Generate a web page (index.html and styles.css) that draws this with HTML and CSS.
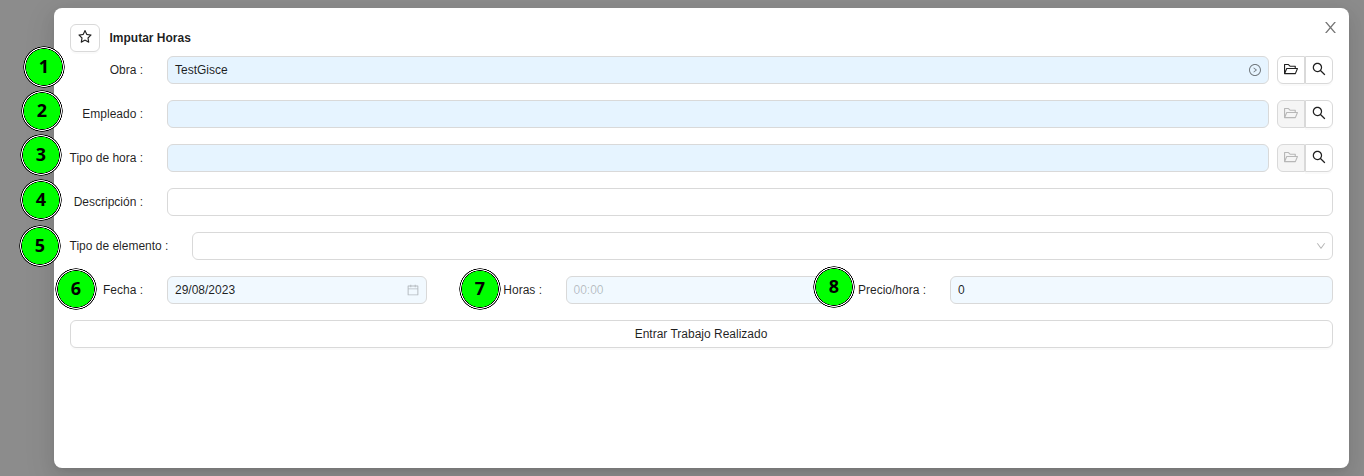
FILE: index.html
```html
<!DOCTYPE html>
<html lang="es">
<head>
<meta charset="utf-8">
<title>Imputar Horas</title>
<link rel="stylesheet" href="styles.css">
</head>
<body>
<svg class="sprite" aria-hidden="true">
  <symbol id="star" viewBox="64 64 896 896"><path d="M908.1 353.1l-253.9-36.9L540.7 86.1c-3.1-6.3-8.2-11.4-14.5-14.5-15.8-7.8-35-1.3-42.9 14.5L369.8 316.2l-253.9 36.9c-7 1-13.4 4.3-18.3 9.3a32.05 32.05 0 00.6 45.3l183.7 179.1-43.4 252.9a31.95 31.95 0 0046.4 33.7L512 754l227.1 119.4c6.2 3.3 13.4 4.4 20.3 3.2 17.4-3 29.1-19.5 26.1-36.9l-43.4-252.9 183.7-179.1c5-4.9 8.3-11.3 9.3-18.3 2.7-17.5-9.5-33.7-27-36.3zM664.8 561.6l36.1 210.3L512 672.7 323.1 772l36.1-210.3-152.8-149L417.6 382 512 190.7 606.4 382l211.2 30.7-152.8 148.9z"/></symbol>
  <symbol id="search" viewBox="64 64 896 896"><path d="M909.6 854.5L649.9 594.8C690.2 542.7 712 479 712 412c0-80.2-31.3-155.4-87.9-212.1-56.6-56.7-132-87.9-212.1-87.9s-155.5 31.3-212.1 87.9C143.2 256.5 112 331.8 112 412c0 80.1 31.3 155.5 87.9 212.1C256.5 680.8 331.8 712 412 712c67 0 130.6-21.8 182.7-62l259.7 259.6a8.2 8.2 0 0011.6 0l43.6-43.5a8.2 8.2 0 000-11.6zM570.4 570.4C528 612.7 471.8 636 412 636s-116-23.3-158.4-65.6C211.3 528 188 471.8 188 412s23.3-116.1 65.6-158.4C296 211.3 352.2 188 412 188s116.1 23.2 158.4 65.6S636 352.2 636 412s-23.3 116.1-65.6 158.4z"/></symbol>
  <symbol id="folder" viewBox="64 64 896 896"><path d="M928 444H820V330.4c0-17.7-14.3-32-32-32H473L355.7 186.2a8.15 8.15 0 00-5.5-2.2H96c-17.7 0-32 14.3-32 32v592c0 17.7 14.3 32 32 32h698c13 0 24.8-7.9 29.7-20l134-332c1.5-3.8 2.3-7.9 2.3-12 0-17.7-14.3-32-32-32zM136 256h188.5l119.6 114.4H748V444H238c-13 0-24.8 7.9-29.7 20L136 643.2V256zm635.3 512H159l103.3-256h612.4L771.3 768z"/></symbol>
  <symbol id="calendar" viewBox="64 64 896 896"><path d="M880 184H712v-64c0-4.4-3.6-8-8-8h-56c-4.4 0-8 3.6-8 8v64H384v-64c0-4.4-3.6-8-8-8h-56c-4.4 0-8 3.6-8 8v64H144c-17.7 0-32 14.3-32 32v664c0 17.7 14.3 32 32 32h736c17.7 0 32-14.3 32-32V216c0-17.7-14.3-32-32-32zm-40 656H184V460h656v380zM184 392V256h128v48c0 4.4 3.6 8 8 8h56c4.4 0 8-3.6 8-8v-48h256v48c0 4.4 3.6 8 8 8h56c4.4 0 8-3.6 8-8v-48h128v136H184z"/></symbol>
  <symbol id="down" viewBox="64 64 896 896"><path d="M884 256h-75c-5.1 0-9.9 2.5-12.9 6.6L512 654.2 227.9 262.6c-3-4.1-7.8-6.6-12.9-6.6h-75c-6.5 0-10.3 7.4-6.5 12.7l352.6 486.1c12.8 17.6 39 17.6 51.7 0l352.6-486.1c3.9-5.3.1-12.7-6.4-12.7z"/></symbol>
  <symbol id="right-circle" viewBox="64 64 896 896"><path d="M666.7 505.5l-246-178A8 8 0 00408 334v46.9c0 10.2 4.9 19.9 13.2 25.9L566.6 512 421.2 617.2c-8.3 6-13.2 15.6-13.2 25.9V690c0 6.5 7.4 10.3 12.7 6.5l246-178c4.4-3.2 4.4-9.8 0-13z"/><path d="M512 64C264.6 64 64 264.6 64 512s200.6 448 448 448 448-200.6 448-448S759.4 64 512 64zm0 820c-205.4 0-372-166.6-372-372s166.6-372 372-372 372 166.6 372 372-166.6 372-372 372z"/></symbol>
  <symbol id="close" viewBox="64 64 896 896"><path d="M563.8 512l262.5-312.9c4.4-5.2.7-13.1-6.1-13.1h-79.8c-4.7 0-9.2 2.1-12.3 5.7L511.6 449.8 295.1 191.7c-3-3.6-7.5-5.7-12.3-5.7H203c-6.8 0-10.5 7.9-6.1 13.1L459.4 512 196.9 824.9A7.95 7.95 0 00203 838h79.8c4.7 0 9.2-2.1 12.3-5.7l216.5-258.1 216.5 258.1c3 3.6 7.5 5.7 12.3 5.7h79.8c6.8 0 10.5-7.9 6.1-13.1L563.8 512z"/></symbol>
</svg>

<main class="modal">
  <button class="close" aria-label="Cerrar"><svg><use href="#close"/></svg></button>
  <header class="header">
    <button class="btn star" aria-label="Favorito"><svg><use href="#star"/></svg></button>
    <h1 class="title">Imputar Horas</h1>
  </header>
  <div class="form">
    <div class="row">
      <span class="label">Obra :</span>
      <div class="field required"><span>TestGisce</span><svg class="go"><use href="#right-circle"/></svg></div>
      <div class="group"><button class="btn"><svg><use href="#folder"/></svg></button><button class="btn"><svg><use href="#search"/></svg></button></div>
    </div>
    <div class="row">
      <span class="label">Empleado :</span>
      <div class="field required"></div>
      <div class="group"><button class="btn off"><svg><use href="#folder"/></svg></button><button class="btn"><svg><use href="#search"/></svg></button></div>
    </div>
    <div class="row">
      <span class="label full">Tipo de hora :</span>
      <div class="field required"></div>
      <div class="group"><button class="btn off"><svg><use href="#folder"/></svg></button><button class="btn"><svg><use href="#search"/></svg></button></div>
    </div>
    <div class="row">
      <span class="label">Descripción :</span>
      <div class="field"></div>
    </div>
    <div class="row">
      <span class="label full wide">Tipo de elemento :</span>
      <div class="field select"><svg class="arrow"><use href="#down"/></svg></div>
    </div>
    <div class="row">
      <span class="label">Fecha :</span>
      <div class="field soft date"><span>29/08/2023</span><svg class="cal"><use href="#calendar"/></svg></div>
      <span class="label hours">Horas :</span>
      <div class="field soft time"><span class="placeholder">00:00</span></div>
      <span class="label price">Precio/hora :</span>
      <div class="field soft"><span>0</span></div>
    </div>
    <button class="btn submit">Entrar Trabajo Realizado</button>
  </div>
</main>

<span class="badge b1">1</span>
<span class="badge b2">2</span>
<span class="badge b3">3</span>
<span class="badge b4">4</span>
<span class="badge b5">5</span>
<span class="badge b6">6</span>
<span class="badge b7">7</span>
<span class="badge b8">8</span>
</body>
</html>
```
FILE: styles.css
```css
* { box-sizing: border-box; }
html, body { height: 100%; }
body {
  margin: 0;
  padding: 8px 15px 8px 54px;
  overflow: hidden;
  background: #8c8c8c;
  color: rgba(0, 0, 0, .88);
  font: 12px/20px "Liberation Sans", Arial, sans-serif;
}
.sprite { display: none; }
svg { display: block; width: 14px; height: 14px; fill: currentColor; flex: none; }
button { font: inherit; color: inherit; }

.modal {
  position: relative;
  height: 460px;
  padding: 16px;
  border-radius: 8px;
  background: #fff;
  box-shadow: 0 6px 16px 0 rgba(0, 0, 0, .08), 0 3px 6px -4px rgba(0, 0, 0, .12), 0 9px 28px 8px rgba(0, 0, 0, .05);
}
.close {
  position: absolute;
  top: 8px;
  right: 8px;
  display: grid;
  place-items: center;
  width: 22px;
  height: 22px;
  padding: 0;
  border: 0;
  background: none;
  color: rgba(0, 0, 0, .55);
}
.close svg { width: 15px; height: 15px; }

.header { display: flex; align-items: center; gap: 9.5px; height: 28px; }
.title { margin: 0; font-size: 12px; font-weight: 700; }
.btn {
  display: flex;
  align-items: center;
  justify-content: center;
  height: 28px;
  padding: 0 0 2px;
  border: 1px solid #d9d9d9;
  border-radius: 6px;
  background: #fff;
  box-shadow: 0 2px 0 rgba(0, 0, 0, .02);
}
.star { width: 30px; }

.form { display: flex; flex-direction: column; gap: 16px; margin-top: 4px; }
.row { display: flex; height: 28px; }
.label { width: 73px; margin-right: 24px; line-height: 28px; text-align: right; white-space: nowrap; }
.label.full { width: 73.5px; margin-left: -.5px; text-align: left; }
.label.wide { width: 98.5px; }
.label.hours { width: 115px; }
.label.price { width: 100px; }
.field {
  display: flex;
  flex: 1;
  align-items: center;
  justify-content: space-between;
  padding: 0 7px;
  border: 1px solid #d9d9d9;
  border-radius: 6px;
  background: #fff;
}
.required { background: #e6f4ff; }
.soft { background: #f1f9ff; }
.select { justify-content: flex-end; padding-right: 6px; }
.date { flex: 0 0 260px; }
.time { flex: 0 0 260px; padding-left: 6.5px; }
.placeholder { color: rgba(0, 0, 0, .25); }
.go { width: 12px; height: 12px; color: rgba(0, 0, 0, .5); }
.cal { width: 12px; height: 12px; color: rgba(0, 0, 0, .25); }
.arrow { width: 10px; height: 10px; color: rgba(0, 0, 0, .3); }

.group { display: flex; margin-left: 8px; }
.group .btn { width: 28px; }
.group .btn:first-child { border-radius: 6px 0 0 6px; }
.group .btn:last-child { border-radius: 0 6px 6px 0; }
.group .off { background: #f5f5f5; color: rgba(0, 0, 0, .25); box-shadow: none; }
.submit { width: 100%; padding: 0 1px 0 0; }

.badge {
  position: absolute;
  width: 42px;
  height: 42px;
  border-radius: 50%;
  background: radial-gradient(circle closest-side, #0f0 17.9px, #000 18.3px, #000 18.5px, #fff 19px, #fff 19.5px, #000 20px, #000 20.4px, transparent 20.9px);
  color: #000;
  font: 700 18px/41px "Noto Sans", sans-serif;
  text-align: center;
}
.b1 { left: 23px; top: 46px; }
.b2 { left: 21px; top: 90px; }
.b3 { left: 20px; top: 134px; }
.b4 { left: 20px; top: 179px; }
.b5 { left: 19px; top: 225px; }
.b6 { left: 55px; top: 268px; }
.b7 { left: 459px; top: 268px; }
.b8 { left: 813px; top: 266px; }
```
